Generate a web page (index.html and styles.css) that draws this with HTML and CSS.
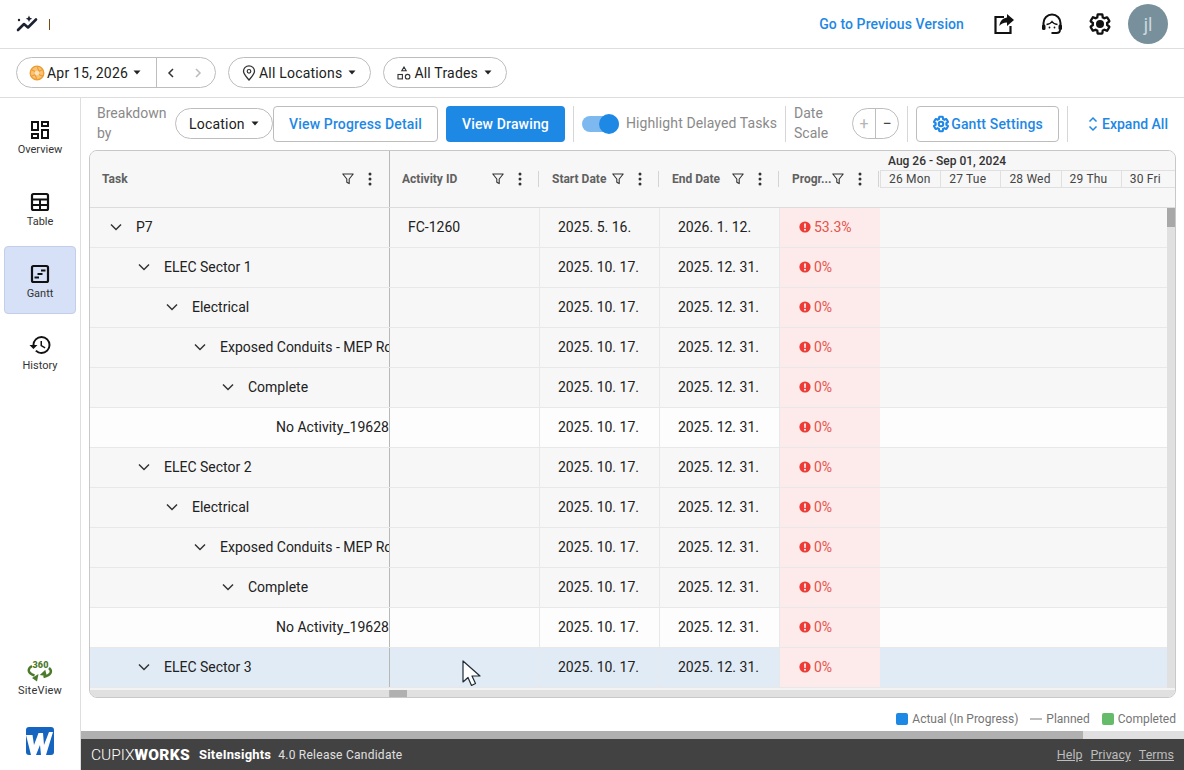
FILE: index.html
```html
<!DOCTYPE html>
<html lang="en">
<head>
    <meta charset="UTF-8">
    <meta name="viewport" content="width=device-width, initial-scale=1.0">
    <title>SiteInsights Gantt</title>
    <link rel="stylesheet" href="styles.css">
</head>
<body>
    <svg class="sprite" xmlns="http://www.w3.org/2000/svg">
        <symbol id="caret" viewBox="0 0 8 5"><path d="M0.5 0.5h7L4 4.5z" fill="currentColor"/></symbol>
        <symbol id="chev" viewBox="0 0 12 8"><path d="M1 1.5l5 5 5-5" fill="none" stroke="currentColor" stroke-width="1.5"/></symbol>
        <symbol id="funnel" viewBox="0 0 12 12"><path d="M0.8 1h10.4L7.2 6v4.6L4.8 9.2V6z" fill="none" stroke="currentColor" stroke-width="1.1" stroke-linejoin="round"/></symbol>
        <symbol id="kebab" viewBox="0 0 4 14"><circle cx="2" cy="2" r="1.5" fill="currentColor"/><circle cx="2" cy="7" r="1.5" fill="currentColor"/><circle cx="2" cy="12" r="1.5" fill="currentColor"/></symbol>
        <symbol id="alert" viewBox="0 0 12 12"><circle cx="6" cy="6" r="5.6" fill="#ef3b36"/><path d="M5.1 2.6h1.8l-.25 4.3H5.35z" fill="#fff"/><circle cx="6" cy="8.8" r="1" fill="#fff"/></symbol>
    </svg>

    <header class="top-bar">
        <svg class="logo-mark" width="24" height="18" viewBox="0 0 24 18">
            <path d="M2 15l6-6 4 3.5 8-8" fill="none" stroke="#1d2230" stroke-width="2.6" stroke-linecap="round" stroke-linejoin="round"/>
            <circle cx="3" cy="5" r="1.2" fill="#1d2230"/>
            <path d="M13 0.5l1 2.2 2.2 1-2.2 1-1 2.2-1-2.2-2.2-1 2.2-1z" fill="#1d2230"/>
        </svg>
        <span class="logo-tick"></span>
        <a class="prev-version">Go to Previous Version</a>
        <div class="top-actions">
            <svg width="24" height="24" viewBox="0 0 24 24">
                <path d="M12 5H3.500v16h15v-7" fill="none" stroke="#111" stroke-width="2.200"/>
                <path d="M15 2l7 6-7 6v-3.600c-3.600 0-6 1.200-7.600 3.600.5-4.400 3-7.700 7.600-8.400z" fill="#111"/>
            </svg>
            <svg width="24" height="24" viewBox="0 0 24 24">
                <path d="M3.500 14v-3a8.500 8.500 0 0 1 17 0v3" fill="none" stroke="#111" stroke-width="2"/>
                <path d="M6.500 12.500c2.500-.3 4.500-1.300 5.500-3 1 1.700 3 2.700 5.500 3" fill="none" stroke="#111" stroke-width="1.300"/>
                <rect x="2" y="12.500" width="3.500" height="5.500" rx="1.500" fill="#111"/>
                <rect x="18.500" y="12.500" width="3.500" height="5.500" rx="1.500" fill="#111"/>
                <circle cx="9.500" cy="15.500" r=".9" fill="#111"/>
                <circle cx="14.500" cy="15.500" r=".9" fill="#111"/>
                <path d="M20 18c0 2-1.500 3-3.500 3h-5" fill="none" stroke="#111" stroke-width="1.800"/>
            </svg>
            <svg width="24" height="24" viewBox="0 0 24 24">
                <path d="M19.140 12.940c.04-.3.06-.61.06-.94 0-.32-.02-.64-.07-.94l2.030-1.580c.18-.14.23-.41.12-.61l-1.920-3.320c-.12-.22-.37-.29-.59-.22l-2.390.96c-.5-.38-1.030-.7-1.620-.94l-.36-2.540c-.04-.24-.24-.41-.48-.41h-3.840c-.24 0-.43.17-.47.41l-.36 2.540c-.59.24-1.130.57-1.620.94l-2.390-.96c-.22-.08-.47 0-.59.22L2.740 8.870c-.12.21-.08.47.12.61l2.030 1.580c-.05.3-.09.63-.09.94s.02.64.07.94l-2.030 1.580c-.18.14-.23.41-.12.61l1.920 3.320c.12.22.37.29.59.22l2.390-.96c.5.38 1.030.7 1.620.94l.36 2.540c.05.24.24.41.48.41h3.840c.24 0 .44-.17.47-.41l.36-2.540c.59-.24 1.130-.56 1.620-.94l2.390.96c.22.08.47 0 .59-.22l1.920-3.320c.12-.22.07-.47-.12-.61l-2.010-1.580z" fill="none" stroke="#111" stroke-width="2.300"/>
                <circle cx="12" cy="12" r="4" fill="#111"/>
            </svg>
            <div class="avatar">jl</div>
        </div>
    </header>

    <div class="filter-bar">
        <div class="pill date-pill">
            <div class="date-main">
                <svg width="16" height="16" viewBox="0 0 16 16">
                    <circle cx="8" cy="8" r="6.800" fill="#f9c377" stroke="#ef9a2d" stroke-width="1.300"/>
                    <path d="M8 1.500l2 4.500M13.600 4.800L9.500 6.500M13.600 11.200L10 9.500M8 14.500L6 10M2.400 11.200L6.500 9.500M2.400 4.800L6 6.500" stroke="#ef9a2d" stroke-width="1.100"/>
                    <circle cx="8" cy="8" r="2.200" fill="#fde3bd"/>
                </svg>
                <span>Apr 15, 2026</span>
                <svg class="caret"><use href="#caret"/></svg>
            </div>
            <div class="date-nav">
                <svg width="8" height="12" viewBox="0 0 8 12"><path d="M6 2L2 6l4 4" fill="none" stroke="#333" stroke-width="1.500"/></svg>
                <svg width="8" height="12" viewBox="0 0 8 12"><path d="M2 2l4 4-4 4" fill="none" stroke="#bbb" stroke-width="1.500"/></svg>
            </div>
        </div>
        <div class="pill filter-pill">
            <svg width="14" height="16" viewBox="0 0 14 16"><path d="M7 15C4 11.500 1.500 9 1.500 6.300a5.500 5.500 0 0 1 11 0C12.500 9 10 11.500 7 15z" fill="none" stroke="#333" stroke-width="1.300"/><circle cx="7" cy="6.300" r="1.800" fill="none" stroke="#333" stroke-width="1.200"/></svg>
            <span>All Locations</span>
            <svg class="caret"><use href="#caret"/></svg>
        </div>
        <div class="pill filter-pill">
            <svg width="14" height="14" viewBox="0 0 14 14"><path d="M7 1l2.200 3.800H4.800z" fill="none" stroke="#333" stroke-width="1.100"/><rect x="1" y="8.500" width="4.400" height="4.400" fill="none" stroke="#333" stroke-width="1.100"/><circle cx="10.600" cy="10.700" r="2.300" fill="none" stroke="#333" stroke-width="1.100"/></svg>
            <span>All Trades</span>
            <svg class="caret"><use href="#caret"/></svg>
        </div>
    </div>

    <div class="layout">
        <nav class="sidebar">
            <a class="nav-item">
                <svg width="24" height="24" viewBox="0 0 24 24"><path d="M19 5v2h-4V5h4M9 5v6H5V5h4m10 8v6h-4v-6h4M9 17v2H5v-2h4M21 3h-8v6h8V3zM11 3H3v10h8V3zm10 8h-8v10h8V11zm-10 4H3v6h8v-6z" fill="#111"/></svg>
                <span>Overview</span>
            </a>
            <a class="nav-item">
                <svg width="24" height="24" viewBox="0 0 24 24"><rect x="4" y="4" width="16" height="16" rx="1.500" fill="none" stroke="#111" stroke-width="2.200"/><path d="M4 9.500h16M4 15h16M12 9.500V20" stroke="#111" stroke-width="2"/></svg>
                <span>Table</span>
            </a>
            <a class="nav-item active">
                <svg width="24" height="24" viewBox="0 0 24 24"><rect x="4" y="4" width="16" height="16" rx="1.500" fill="none" stroke="#111" stroke-width="2.200"/><path d="M13 8.500h4.500M9.500 12h5M6.500 15.500h4.500" stroke="#111" stroke-width="1.800"/></svg>
                <span>Gantt</span>
            </a>
            <a class="nav-item">
                <svg width="24" height="24" viewBox="-0.500 1 24 24"><path d="M13 3a9 9 0 0 0-9 9H1l3.890 3.890.07.14L9 12H6c0-3.870 3.130-7 7-7s7 3.130 7 7-3.130 7-7 7c-1.930 0-3.680-.79-4.940-2.060l-1.420 1.420A8.954 8.954 0 0 0 13 21a9 9 0 0 0 0-18zm-1 5v5l4.280 2.540.72-1.210-3.500-2.080V8H12z" fill="#111"/></svg>
                <span>History</span>
            </a>
            <div class="nav-bottom">
                <a class="nav-item site-view">
                    <svg width="28" height="21" viewBox="0 0 28 21">
                        <text x="14.500" y="7" class="deg">360</text>
                        <path d="M6 5C1.500 7.500 1 12 8.500 14.500" fill="none" stroke="#4b7a2b" stroke-width="2.400"/>
                        <path d="M11 20.500l1.500-7.500-6.500 4z" fill="#4b7a2b"/>
                        <path d="M23 7c3.500 3 2.500 7-5.500 9" fill="none" stroke="#4b7a2b" stroke-width="2.400"/>
                        <path d="M17 8l-1.500 7.500 6.500-3z" fill="#4b7a2b" transform="rotate(35 17 12)"/>
                    </svg>
                    <span>SiteView</span>
                </a>
                <svg class="w-logo" width="28" height="28" viewBox="0 0 28 28">
                    <rect width="28" height="28" rx="3" fill="#1565c0"/>
                    <path d="M0 8h6.500l1.500 10L12.500 6H17l1 12L23 5h4l-7 23h-5l-1-10-4 10H5z" fill="#fff"/>
                </svg>
            </div>
        </nav>

        <main class="main">
            <div class="toolbar">
                <div class="tool-label breakdown">Breakdown by</div>
                <div class="pill location-pill">
                    <span>Location</span>
                    <svg class="caret"><use href="#caret"/></svg>
                </div>
                <button class="btn btn-outline progress-btn">View Progress Detail</button>
                <button class="btn btn-solid">View Drawing</button>
                <span class="tool-sep"></span>
                <div class="switch"><span class="knob"></span></div>
                <span class="tool-label highlight">Highlight Delayed Tasks</span>
                <span class="tool-sep"></span>
                <div class="tool-label date-scale">Date Scale</div>
                <div class="scale-pill">
                    <span class="scale-plus">+</span>
                    <span class="scale-minus">&minus;</span>
                </div>
                <span class="tool-sep"></span>
                <button class="btn btn-outline settings-btn">
                    <svg width="18" height="18" viewBox="0 0 24 24"><path d="M19.140 12.940c.04-.3.06-.61.06-.94 0-.32-.02-.64-.07-.94l2.030-1.580c.18-.14.23-.41.12-.61l-1.920-3.320c-.12-.22-.37-.29-.59-.22l-2.390.96c-.5-.38-1.030-.7-1.620-.94l-.36-2.540c-.04-.24-.24-.41-.48-.41h-3.840c-.24 0-.43.17-.47.41l-.36 2.540c-.59.24-1.130.57-1.620.94l-2.390-.96c-.22-.08-.47 0-.59.22L2.740 8.870c-.12.21-.08.47.12.61l2.030 1.580c-.05.3-.09.63-.09.94s.02.64.07.94l-2.030 1.580c-.18.14-.23.41-.12.61l1.920 3.320c.12.22.37.29.59.22l2.390-.96c.5.38 1.030.7 1.620.94l.36 2.540c.05.24.24.41.48.41h3.840c.24 0 .44-.17.47-.41l.36-2.540c.59-.24 1.130-.56 1.620-.94l2.390.96c.22.08.47 0 .59-.22l1.920-3.320c.12-.22.07-.47-.12-.61l-2.010-1.580z" fill="none" stroke="#1e88e5" stroke-width="2.800"/><circle cx="12" cy="12" r="3" fill="none" stroke="#1e88e5" stroke-width="2.800"/></svg>
                    <span>Gantt Settings</span>
                </button>
                <span class="tool-sep"></span>
                <a class="expand-all">
                    <svg width="10" height="16" viewBox="0 0 10 16"><path d="M1.500 5.500L5 2l3.500 3.500M1.500 10.500L5 14l3.500-3.500" fill="none" stroke="#1e88e5" stroke-width="1.500"/></svg>
                    <span>Expand All</span>
                </a>
            </div>

            <section class="grid-box">
                <div class="grid-row grid-head">
                    <div class="head-cell task-col"><span class="head-label">Task</span><svg class="funnel"><use href="#funnel"/></svg><svg class="kebab"><use href="#kebab"/></svg></div>
                    <div class="head-cell"><span class="head-label">Activity ID</span><svg class="funnel"><use href="#funnel"/></svg><svg class="kebab"><use href="#kebab"/></svg></div>
                    <div class="head-cell"><span class="head-label">Start Date</span><svg class="funnel"><use href="#funnel"/></svg><svg class="kebab"><use href="#kebab"/></svg></div>
                    <div class="head-cell"><span class="head-label">End Date</span><svg class="funnel"><use href="#funnel"/></svg><svg class="kebab"><use href="#kebab"/></svg></div>
                    <div class="head-cell"><span class="head-label">Progr...</span><svg class="funnel"><use href="#funnel"/></svg><svg class="kebab"><use href="#kebab"/></svg></div>
                    <div class="timeline-head">
                        <div class="week-label">Aug 26 - Sep 01, 2024</div>
                        <div class="day-row">
                            <span>26 Mon</span><span>27 Tue</span><span>28 Wed</span><span>29 Thu</span><span>30 Fri</span>
                        </div>
                    </div>
                </div>

                <div class="grid-body">
                    <div class="rows">
                        <div class="grid-row">
                            <div class="cell task-col lvl-0"><svg class="chev"><use href="#chev"/></svg><span>P7</span></div>
                            <div class="cell">FC-1260</div>
                            <div class="cell">2025. 5. 16.</div>
                            <div class="cell">2026. 1. 12.</div>
                            <div class="cell progress"><svg class="alert"><use href="#alert"/></svg>53.3%</div>
                            <div class="cell-fill"></div>
                        </div>
                        <div class="grid-row">
                            <div class="cell task-col lvl-1"><svg class="chev"><use href="#chev"/></svg><span>ELEC Sector 1</span></div>
                            <div class="cell"></div>
                            <div class="cell">2025. 10. 17.</div>
                            <div class="cell">2025. 12. 31.</div>
                            <div class="cell progress"><svg class="alert"><use href="#alert"/></svg>0%</div>
                            <div class="cell-fill"></div>
                        </div>
                        <div class="grid-row">
                            <div class="cell task-col lvl-2"><svg class="chev"><use href="#chev"/></svg><span>Electrical</span></div>
                            <div class="cell"></div>
                            <div class="cell">2025. 10. 17.</div>
                            <div class="cell">2025. 12. 31.</div>
                            <div class="cell progress"><svg class="alert"><use href="#alert"/></svg>0%</div>
                            <div class="cell-fill"></div>
                        </div>
                        <div class="grid-row">
                            <div class="cell task-col lvl-3"><svg class="chev"><use href="#chev"/></svg><span>Exposed Conduits - MEP Rough</span></div>
                            <div class="cell"></div>
                            <div class="cell">2025. 10. 17.</div>
                            <div class="cell">2025. 12. 31.</div>
                            <div class="cell progress"><svg class="alert"><use href="#alert"/></svg>0%</div>
                            <div class="cell-fill"></div>
                        </div>
                        <div class="grid-row">
                            <div class="cell task-col lvl-4"><svg class="chev"><use href="#chev"/></svg><span>Complete</span></div>
                            <div class="cell"></div>
                            <div class="cell">2025. 10. 17.</div>
                            <div class="cell">2025. 12. 31.</div>
                            <div class="cell progress"><svg class="alert"><use href="#alert"/></svg>0%</div>
                            <div class="cell-fill"></div>
                        </div>
                        <div class="grid-row leaf">
                            <div class="cell task-col lvl-5"><span>No Activity_19628</span></div>
                            <div class="cell"></div>
                            <div class="cell">2025. 10. 17.</div>
                            <div class="cell">2025. 12. 31.</div>
                            <div class="cell progress"><svg class="alert"><use href="#alert"/></svg>0%</div>
                            <div class="cell-fill"></div>
                        </div>
                        <div class="grid-row">
                            <div class="cell task-col lvl-1"><svg class="chev"><use href="#chev"/></svg><span>ELEC Sector 2</span></div>
                            <div class="cell"></div>
                            <div class="cell">2025. 10. 17.</div>
                            <div class="cell">2025. 12. 31.</div>
                            <div class="cell progress"><svg class="alert"><use href="#alert"/></svg>0%</div>
                            <div class="cell-fill"></div>
                        </div>
                        <div class="grid-row">
                            <div class="cell task-col lvl-2"><svg class="chev"><use href="#chev"/></svg><span>Electrical</span></div>
                            <div class="cell"></div>
                            <div class="cell">2025. 10. 17.</div>
                            <div class="cell">2025. 12. 31.</div>
                            <div class="cell progress"><svg class="alert"><use href="#alert"/></svg>0%</div>
                            <div class="cell-fill"></div>
                        </div>
                        <div class="grid-row">
                            <div class="cell task-col lvl-3"><svg class="chev"><use href="#chev"/></svg><span>Exposed Conduits - MEP Rough</span></div>
                            <div class="cell"></div>
                            <div class="cell">2025. 10. 17.</div>
                            <div class="cell">2025. 12. 31.</div>
                            <div class="cell progress"><svg class="alert"><use href="#alert"/></svg>0%</div>
                            <div class="cell-fill"></div>
                        </div>
                        <div class="grid-row">
                            <div class="cell task-col lvl-4"><svg class="chev"><use href="#chev"/></svg><span>Complete</span></div>
                            <div class="cell"></div>
                            <div class="cell">2025. 10. 17.</div>
                            <div class="cell">2025. 12. 31.</div>
                            <div class="cell progress"><svg class="alert"><use href="#alert"/></svg>0%</div>
                            <div class="cell-fill"></div>
                        </div>
                        <div class="grid-row leaf">
                            <div class="cell task-col lvl-5"><span>No Activity_19628</span></div>
                            <div class="cell"></div>
                            <div class="cell">2025. 10. 17.</div>
                            <div class="cell">2025. 12. 31.</div>
                            <div class="cell progress"><svg class="alert"><use href="#alert"/></svg>0%</div>
                            <div class="cell-fill"></div>
                        </div>
                        <div class="grid-row hovered">
                            <div class="cell task-col lvl-1"><svg class="chev"><use href="#chev"/></svg><span>ELEC Sector 3</span></div>
                            <div class="cell"></div>
                            <div class="cell">2025. 10. 17.</div>
                            <div class="cell">2025. 12. 31.</div>
                            <div class="cell progress"><svg class="alert"><use href="#alert"/></svg>0%</div>
                            <div class="cell-fill"></div>
                        </div>
                    </div>
                    <div class="v-scroll"><div class="v-thumb"></div></div>
                </div>
                <div class="h-scroll"><div class="h-thumb"></div></div>
            </section>

            <div class="legend">
                <span class="legend-item"><i class="swatch swatch-blue"></i>Actual (In Progress)</span>
                <span class="legend-item"><i class="dash"></i>Planned</span>
                <span class="legend-item"><i class="swatch swatch-green"></i>Completed</span>
            </div>

            <div class="page-scroll"><div class="page-thumb"></div></div>

            <footer class="footer">
                <span class="brand"><span class="brand-light">CUPIX</span><b>WORKS</b></span>
                <span class="product">SiteInsights</span>
                <span class="version">4.0 Release Candidate</span>
                <span class="footer-links">
                    <a>Help</a>
                    <a>Privacy</a>
                    <a>Terms</a>
                </span>
            </footer>
        </main>
    </div>

    <!-- mouse pointer caught in the screenshot -->
    <svg class="pointer" width="20" height="30" viewBox="0 0 20 30">
        <path d="M1 1v21l5-4.500 3.500 8 4-2-3.500-7.500H18z" fill="#fff" stroke="#1f2a36" stroke-width="1.200" stroke-linejoin="round"/>
    </svg>
</body>
</html>
```

FILE: styles.css
```css
* {
  margin: 0;
  padding: 0;
  box-sizing: border-box;
}

body {
  width: 1184px;
  height: 770px;
  overflow: hidden;
  display: flex;
  flex-direction: column;
  background-color: white;
  color: #212121;
  font-family: Roboto, "Liberation Sans", sans-serif;
  font-size: 14px;
}

.sprite {
  display: none;
}

/* top bar */
.top-bar {
  height: 49px;
  flex: none;
  display: flex;
  align-items: center;
  padding: 0 16px;
  border-bottom: 1px solid #dedede;
}

.logo-tick {
  width: 1px;
  height: 11px;
  margin-left: 9px;
  background-color: #7a4a10;
}

.prev-version {
  margin-left: auto;
  color: #1e88e5;
  font-weight: 500;
  font-size: 14px;
  letter-spacing: 0.1px;
}

.top-actions {
  display: flex;
  align-items: center;
  gap: 24px;
  margin-left: 28px;
}

.avatar {
  width: 40px;
  height: 40px;
  margin-left: -8px;
  border-radius: 50%;
  display: flex;
  align-items: center;
  justify-content: center;
  background-color: #78909c;
  color: #cfd8dc;
  font-size: 18px;
}

/* filters */
.filter-bar {
  height: 49px;
  flex: none;
  display: flex;
  align-items: center;
  gap: 12px;
  padding: 0 16px 1px;
  border-bottom: 1px solid #dedede;
}

.pill {
  height: 31px;
  display: flex;
  align-items: center;
  border: 1px solid #bdbdbd;
  border-radius: 16px;
  background-color: white;
  letter-spacing: 0.2px;
}

.caret {
  width: 8px;
  height: 5px;
  color: #222;
}

.date-pill {
  width: 200px;
}

.date-main {
  width: 140px;
  height: 100%;
  display: flex;
  align-items: center;
  gap: 2px;
  padding-left: 12px;
  border-right: 1px solid #bdbdbd;
}

.date-main .caret {
  margin-left: 3px;
}

.date-nav {
  flex: 1;
  display: flex;
  align-items: center;
  justify-content: space-between;
  padding: 0 13px 0 10px;
}

.filter-pill {
  gap: 3px;
  padding: 0 14px 0 13px;
}

.filter-pill .caret {
  margin-left: 3px;
}

/* layout */
.layout {
  flex: 1;
  min-height: 0;
  display: flex;
}

.sidebar {
  width: 81px;
  flex: none;
  display: flex;
  flex-direction: column;
  gap: 4px;
  padding: 4px 4px 15px;
  border-right: 1px solid #dedede;
}

.nav-item {
  width: 72px;
  height: 68px;
  display: flex;
  flex-direction: column;
  align-items: center;
  justify-content: center;
  gap: 1px;
  padding-top: 2px;
  border-radius: 4px;
  font-size: 11px;
  color: #333;
}

.nav-item.active {
  background-color: #d6e0f7;
  border: 1px solid #c3cfe8;
}

.nav-bottom {
  margin-top: auto;
  display: flex;
  flex-direction: column;
  align-items: center;
}

.site-view {
  height: 50px;
  gap: 2px;
  margin-bottom: 24px;
  letter-spacing: 0.2px;
}

.deg {
  font-family: Roboto, sans-serif;
  font-size: 9px;
  font-weight: 900;
  text-anchor: middle;
  fill: #4b7a2b;
}

.main {
  flex: 1;
  min-width: 0;
  display: flex;
  flex-direction: column;
}

/* toolbar */
.toolbar {
  height: 52px;
  flex: none;
  display: flex;
  align-items: center;
  padding: 0 15px 0 16px;
}

.tool-label {
  color: #8a8a8a;
  line-height: 20px;
  margin-top: -1px;
  margin-bottom: 1px;
}

.breakdown {
  width: 78px;
}

.location-pill {
  width: 98px;
  gap: 6px;
  padding-left: 13px;
  margin-bottom: 1px;
  flex: none;
}

.btn {
  height: 36px;
  border-radius: 4px;
  font-family: inherit;
  font-size: 14px;
  font-weight: 500;
  letter-spacing: 0.15px;
}

.btn-outline {
  background-color: white;
  border: 1px solid #bdbdbd;
  color: #1e88e5;
}

.btn-solid {
  width: 119px;
  margin-left: 8px;
  border: none;
  background-color: #1e88e5;
  color: white;
}

.progress-btn {
  width: 165px;
}

.tool-sep {
  width: 1px;
  height: 36px;
  flex: none;
  margin: 0 8px;
  background-color: #d6d6d6;
}

.switch {
  width: 37px;
  height: 16px;
  flex: none;
  display: flex;
  align-items: center;
  justify-content: flex-end;
  border-radius: 8px;
  background-color: #7db8ef;
}

.knob {
  width: 20px;
  height: 20px;
  border-radius: 50%;
  background-color: #1e88e5;
}

.highlight {
  margin-left: 7px;
  white-space: nowrap;
  letter-spacing: 0.1px;
}

.date-scale {
  width: 58px;
}

.scale-pill {
  width: 47px;
  height: 31px;
  flex: none;
  display: flex;
  align-items: center;
  margin-bottom: 1px;
  border: 1px solid #bdbdbd;
  border-radius: 16px;
}

.scale-pill span {
  flex: 1;
  text-align: center;
  font-size: 16px;
  line-height: 29px;
}

.scale-plus {
  color: #b5b5b5;
  border-right: 1px solid #bdbdbd;
}

.scale-minus {
  color: #444;
}

.settings-btn {
  width: 143px;
  display: flex;
  align-items: center;
  justify-content: center;
  gap: 1px;
}

.expand-all {
  display: flex;
  align-items: center;
  gap: 4px;
  margin-left: 12px;
  color: #1e88e5;
  font-weight: 500;
  white-space: nowrap;
}

/* gantt grid */
.grid-box {
  height: 548px;
  flex: none;
  margin: 0 8px;
  display: flex;
  flex-direction: column;
  overflow: hidden;
  border: 1px solid #c8c8c8;
  border-radius: 8px;
  background-color: #f7f7f7;
}

.grid-row {
  display: grid;
  grid-template-columns: 300px 150px 120px 120px 100px 1fr;
  height: 40px;
  border-bottom: 1px solid #e8e8e8;
  background-color: #f7f7f7;
}

.grid-row.leaf {
  background-color: #fdfdfd;
}

.grid-row.hovered {
  background-color: #e1ebf5;
}

.grid-head {
  height: 57px;
  flex: none;
  border-bottom: 1px solid #dcdcdc;
}

.head-cell {
  display: flex;
  align-items: center;
  padding: 0 18px 0 12px;
  position: relative;
  font-size: 12px;
  font-weight: 700;
  color: #616161;
}

.head-cell::after {
  content: "";
  position: absolute;
  top: 20px;
  right: 1px;
  width: 1px;
  height: 16px;
  background-color: #d4d4d4;
}

.head-label {
  flex: 1;
  white-space: nowrap;
}

.funnel {
  width: 12px;
  height: 12px;
  color: #333;
  margin-right: 14px;
}

.kebab {
  width: 4px;
  height: 14px;
  color: #333;
}

.task-col {
  border-right: 1px solid #b8b8b8;
}

.head-cell.task-col {
  padding-right: 17px;
}

.head-cell.task-col::after {
  display: none;
}

.timeline-head {
  min-width: 0;
  overflow: hidden;
}

.week-label {
  height: 19px;
  padding: 3px 0 0 8px;
  font-size: 12px;
  font-weight: 500;
  line-height: 14px;
  color: #333;
}

.day-row {
  height: 18px;
  display: flex;
  border-top: 1px solid #e0e0e0;
  border-bottom: 1px solid #e0e0e0;
}

.day-row span {
  width: 60.200px;
  flex: none;
  padding-left: 8px;
  border-left: 1px solid #e0e0e0;
  font-size: 12px;
  line-height: 16px;
  color: #444;
  letter-spacing: 0.2px;
}

.grid-body {
  flex: 1;
  min-height: 0;
  display: flex;
}

.rows {
  flex: 1;
  min-width: 0;
}

.cell {
  display: flex;
  align-items: center;
  padding-left: 18px;
  padding-bottom: 2px;
  overflow: hidden;
  white-space: nowrap;
  border-right: 1px solid #e8e8e8;
  color: #212121;
}

.cell.task-col {
  border-right: 1px solid #b8b8b8;
}

.chev {
  width: 12px;
  height: 8px;
  flex: none;
  margin-right: 14px;
  color: #333;
}

.lvl-0 { padding-left: 20px; }
.lvl-1 { padding-left: 48px; }
.lvl-2 { padding-left: 76px; }
.lvl-3 { padding-left: 104px; }
.lvl-4 { padding-left: 132px; }
.lvl-5 { padding-left: 186px; }

.progress {
  padding-left: 19px;
  background-color: #fdeaea;
  color: #e5534b;
  border-right: none;
}

.alert {
  width: 12px;
  height: 12px;
  flex: none;
  margin-right: 3px;
}

.v-scroll {
  width: 8px;
  flex: none;
  background-color: #e0e0e0;
}

.v-thumb {
  height: 19px;
  background-color: #a8a8a8;
}

.h-scroll {
  height: 9px;
  flex: none;
  padding-left: 299px;
  border-top: 2px solid #f3f3f3;
  background-color: #e0e0e0;
}

.h-thumb {
  width: 18px;
  height: 100%;
  border-left: 1px solid #b8b8b8;
  background-color: #b0b0b0;
}

/* legend */
.legend {
  height: 33px;
  flex: none;
  display: flex;
  align-items: center;
  justify-content: flex-end;
  gap: 12px;
  padding: 8px 8px 0 0;
  font-size: 12px;
  color: #757575;
}

.legend-item {
  display: flex;
  align-items: center;
  gap: 4px;
}

.swatch {
  width: 12px;
  height: 12px;
  border-radius: 2px;
}

.swatch-blue {
  background-color: #1e88e5;
}

.swatch-green {
  background-color: #66bb6a;
}

.dash {
  width: 12px;
  height: 2px;
  background-color: #bdbdbd;
}

.page-scroll {
  height: 8px;
  flex: none;
  background-color: #e0e0e0;
}

.page-thumb {
  width: 1002px;
  height: 100%;
  background-color: #b0b0b0;
}

/* footer */
.footer {
  height: 31px;
  flex: none;
  display: flex;
  align-items: center;
  padding: 0 10px;
  background-color: #424242;
  color: #e0e0e0;
  font-size: 12px;
}

.brand {
  font-size: 15.500px;
  color: white;
  white-space: nowrap;
}

.brand-light {
  font-weight: 300;
}

.brand b {
  font-weight: 900;
  letter-spacing: 0.3px;
}

.product {
  margin-left: 9px;
  font-size: 13px;
  font-weight: 700;
  letter-spacing: 0.2px;
  color: white;
}

.version {
  margin-left: 7px;
  letter-spacing: 0.25px;
}

.footer-links {
  margin-left: auto;
  display: flex;
  gap: 8px;
  font-size: 12.500px;
  color: #bdbdbd;
}

.footer-links a {
  text-decoration: underline;
}

.pointer {
  position: absolute;
  left: 462px;
  top: 660px;
}
```
